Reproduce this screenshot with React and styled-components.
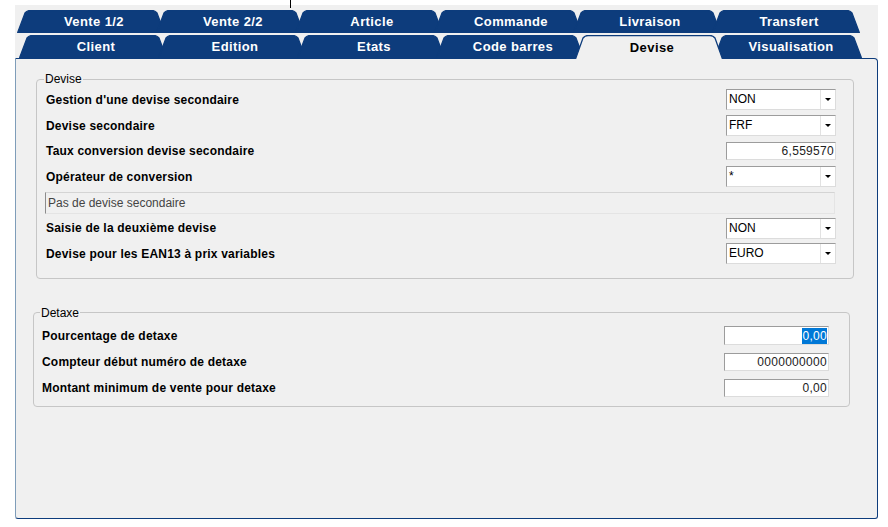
import styled, { createGlobalStyle } from "styled-components";

const TAB_W = 148;
const TAB_H = 23;
const SLANT = 10;
const OVERLAP = 9;
const NAVY = "#0d3c7c";

const GlobalStyle = createGlobalStyle`
  html, body {
    margin: 0;
    background: #ffffff;
    font-family: "Liberation Sans", Arial, sans-serif;
  }
`;

const Page = styled.div`
  position: relative;
  width: 888px;
  height: 527px;
  padding-top: 5px;
  box-sizing: border-box;
`;

const Caret = styled.div`
  position: absolute;
  left: 290px;
  top: 0;
  width: 1px;
  height: 8px;
  background: #000;
`;

const Window = styled.div`
  margin-left: 15px;
  width: 863px;
  height: 514px;
  background: #f0f0f0;
  padding-top: 5px;
  box-sizing: border-box;
  display: flex;
  flex-direction: column;
`;

const TabRow = styled.div`
  display: flex;
  height: ${TAB_H}px;
  padding-left: ${(p) => p.$offset}px;
  margin-bottom: ${(p) => p.$gap}px;
  position: relative;
  z-index: 1;
`;

const Tab = styled.div`
  position: relative;
  flex: 0 0 ${TAB_W}px;
  height: ${(p) => (p.$active ? TAB_H + 1 : TAB_H)}px;
  margin-left: -${OVERLAP}px;
  display: flex;
  align-items: center;
  justify-content: center;
  padding-left: 6px;
  box-sizing: border-box;
  z-index: ${(p) => (p.$active ? 2 : 0)};
  font-size: 13px;
  font-weight: bold;
  letter-spacing: 0.4px;
  color: ${(p) => (p.$active ? "#000" : "#fff")};

  &:first-child {
    margin-left: 0;
  }

  svg {
    position: absolute;
    left: 0;
    top: 0;
  }

  span {
    position: relative;
  }
`;

const Panel = styled.div`
  flex: 1;
  border: 1px solid ${NAVY};
  border-left-color: #7f9db9;
  border-radius: 0 4px 3px 3px;
  display: flex;
  flex-direction: column;
`;

const Group = styled.fieldset`
  margin: ${(p) => p.$top}px ${(p) => p.$right}px 0 ${(p) => p.$left}px;
  padding: ${(p) => p.$padTop}px ${(p) => p.$padRight}px
    ${(p) => p.$padBottom}px ${(p) => p.$padLeft}px;
  border: 1px solid #c6c6c6;
  border-radius: 4px;
  min-width: 0;

  legend {
    margin-left: -2px;
    padding: 0 1px;
    font-size: 12px;
    line-height: 14px;
    color: #000;
  }
`;

const Rows = styled.div`
  display: grid;
  grid-auto-rows: ${(p) => p.$pitch}px;
  align-items: center;
`;

const Row = styled.div`
  display: flex;
  align-items: center;
  justify-content: space-between;
`;

const Label = styled.span`
  font-size: 12px;
  font-weight: bold;
  letter-spacing: 0.2px;
  color: #000;
`;

const SelectBox = styled.div`
  width: 110px;
  height: 21px;
  box-sizing: border-box;
  display: flex;
  background: #fff;
  border: 1px solid;
  border-color: #9c9c9c #dcdcdc #dcdcdc #9c9c9c;
`;

const SelectValue = styled.span`
  flex: 1;
  padding-left: 2px;
  font-size: 12px;
  line-height: 19px;
  color: #000;
`;

const SelectButton = styled.span`
  width: 14px;
  border-left: 1px solid #e2e2e2;
  display: flex;
  align-items: center;
  justify-content: center;

  &::after {
    content: "";
    border-left: 3px solid transparent;
    border-right: 3px solid transparent;
    border-top: 3px solid #000;
  }
`;

const NumberField = styled.div`
  width: ${(p) => p.$width}px;
  height: ${(p) => p.$height}px;
  box-sizing: border-box;
  display: flex;
  align-items: center;
  justify-content: flex-end;
  padding-right: 1px;
  background: #fff;
  border: 1px solid;
  border-color: #9c9c9c #dcdcdc #dcdcdc #9c9c9c;
  font-size: 12px;
  color: #222;
  letter-spacing: 0.3px;
`;

const Selected = styled.span`
  background: #0078d7;
  color: #fff;
  line-height: 16px;
`;

const InfoField = styled.div`
  height: 22px;
  margin: 0 1px 0 -1px;
  box-sizing: border-box;
  display: flex;
  align-items: center;
  padding-left: 2px;
  border: 1px solid;
  border-color: #d4d4d4 #e4e4e4 #e4e4e4 #8c8c8c;
  font-size: 12px;
  color: #444;
`;

function TabShape({ active }) {
  const w = TAB_W;
  const h = active ? TAB_H + 1 : TAB_H;
  const outline = `M0.5,${h} L${SLANT - 2},3 Q${SLANT},0.5 ${SLANT + 3},0.5 L${
    w - SLANT - 3
  },0.5 Q${w - SLANT},0.5 ${w - SLANT + 2},3 L${w - 0.5},${h}`;
  return (
    <svg width={w} height={h} viewBox={`0 0 ${w} ${h}`}>
      <path
        d={outline + " Z"}
        fill={active ? "#f0f0f0" : NAVY}
        stroke="none"
      />
      <path d={outline} fill="none" stroke={NAVY} strokeWidth="1.3" />
    </svg>
  );
}

const topTabs = ["Vente 1/2", "Vente 2/2", "Article", "Commande", "Livraison", "Transfert"];
const bottomTabs = ["Client", "Edition", "Etats", "Code barres", "Devise", "Visualisation"];

function Select({ value }) {
  return (
    <SelectBox>
      <SelectValue>{value}</SelectValue>
      <SelectButton />
    </SelectBox>
  );
}

export default function App() {
  return (
    <Page>
      <GlobalStyle />
      <Caret />
      <Window>
        <TabRow $offset={2} $gap={2}>
          {topTabs.map((t) => (
            <Tab key={t}>
              <TabShape />
              <span>{t}</span>
            </Tab>
          ))}
        </TabRow>
        <TabRow $offset={4} $gap={0}>
          {bottomTabs.map((t) => (
            <Tab key={t} $active={t === "Devise"}>
              <TabShape active={t === "Devise"} />
              <span>{t}</span>
            </Tab>
          ))}
        </TabRow>
        <Panel>
          <Group $top={13} $right={23} $left={20} $padTop={1} $padRight={17} $padBottom={11} $padLeft={9}>
            <legend>Devise</legend>
            <Rows $pitch={25.7}>
              <Row>
                <Label>Gestion d'une devise secondaire</Label>
                <Select value="NON" />
              </Row>
              <Row>
                <Label>Devise secondaire</Label>
                <Select value="FRF" />
              </Row>
              <Row>
                <Label>Taux conversion devise secondaire</Label>
                <NumberField $width={110} $height={18}>6,559570</NumberField>
              </Row>
              <Row>
                <Label>Opérateur de conversion</Label>
                <Select value="*" />
              </Row>
              <InfoField>Pas de devise secondaire</InfoField>
              <Row>
                <Label>Saisie de la deuxième devise</Label>
                <Select value="NON" />
              </Row>
              <Row>
                <Label>Devise pour les EAN13 à prix variables</Label>
                <Select value="EURO" />
              </Row>
            </Rows>
          </Group>
          <Group $top={27} $right={27} $left={17} $padTop={3} $padRight={20} $padBottom={5} $padLeft={8}>
            <legend>Detaxe</legend>
            <Rows $pitch={26}>
              <Row>
                <Label>Pourcentage de detaxe</Label>
                <NumberField $width={105} $height={19}>
                  <Selected>0,00</Selected>
                </NumberField>
              </Row>
              <Row>
                <Label>Compteur début numéro de detaxe</Label>
                <NumberField $width={105} $height={18}>0000000000</NumberField>
              </Row>
              <Row>
                <Label>Montant minimum de vente pour detaxe</Label>
                <NumberField $width={105} $height={18}>0,00</NumberField>
              </Row>
            </Rows>
          </Group>
        </Panel>
      </Window>
    </Page>
  );
}
